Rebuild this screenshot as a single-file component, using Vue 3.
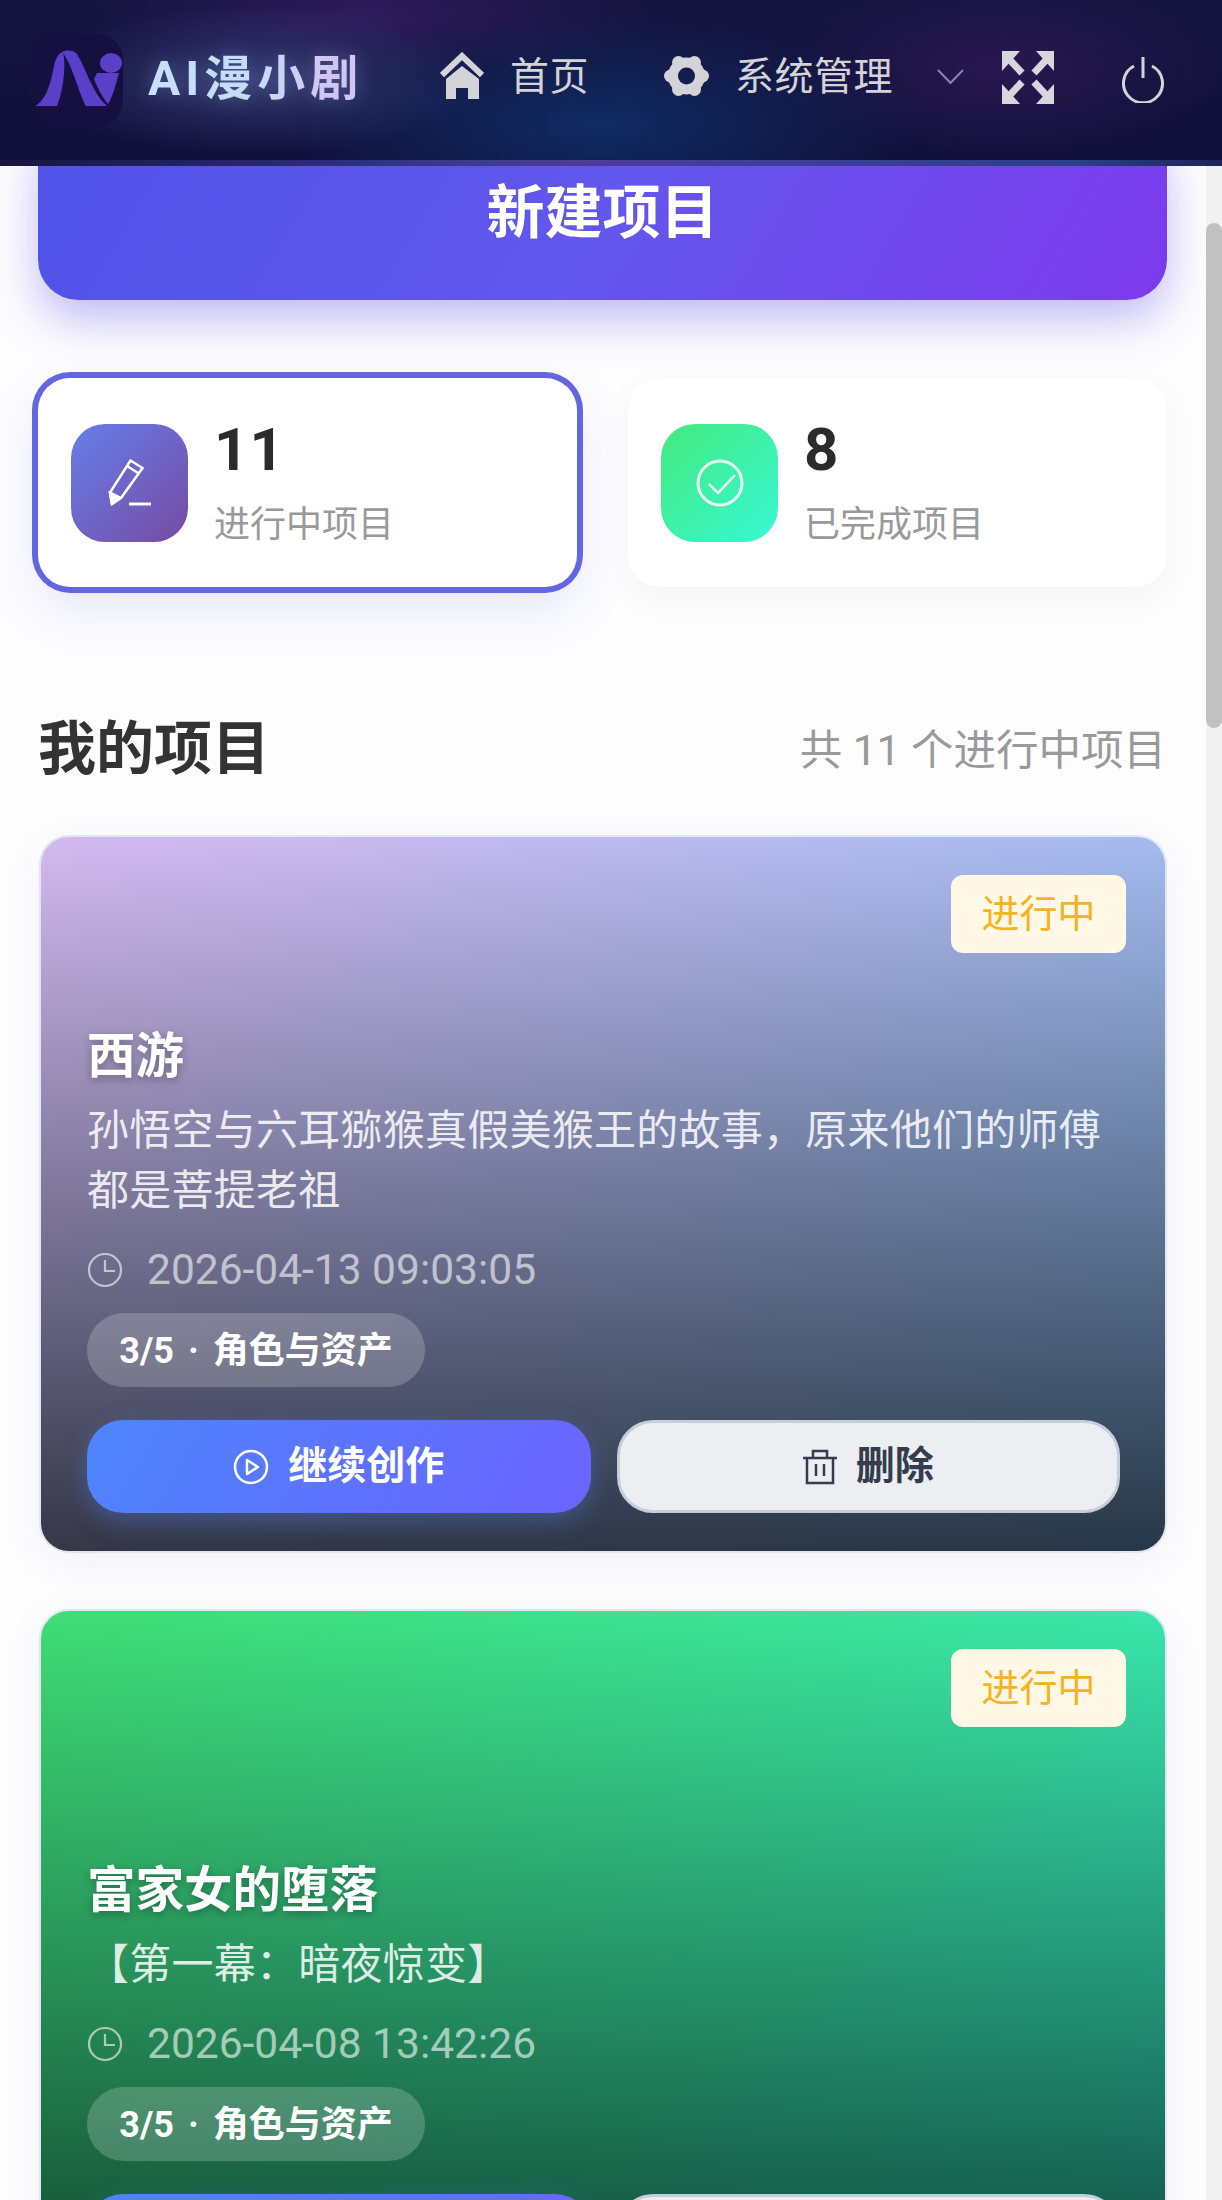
<template>
  <div class="page">
    <header class="topbar">
      <div class="logo">
        <svg viewBox="33 33 90 92" width="90" height="92">
          <path class="ni" d="M35 105C45 100 50 85 53 70C55 58 58 52 63 51C66 62 64 88 57 105Z" />
          <path class="ni" d="M62 51C66 49 72 49 76 52C84 62 92 92 107 105H86C80 96 72 62 62 51Z" />
          <path class="ni" d="M97 72H119C116 82 113 96 108 103C102 96 97 86 94 78C95 76 96 74 97 72Z" />
          <ellipse class="ni" cx="111" cy="62" rx="11" ry="10" />
        </svg>
      </div>
      <div class="brand">AI漫小剧</div>
      <nav class="nav">
        <div class="nav-item">
          <svg viewBox="440 52 44 48" width="44" height="48">
            <path d="M442 75L462 56L482 75" fill="none" stroke="#d3d3d8" stroke-width="6" />
            <path d="M462 66L479 79V99H468V88H456V99H446V79Z" fill="#d3d3d8" />
          </svg>
          <span>首页</span>
        </div>
        <div class="nav-item system">
          <svg viewBox="0 0 45 44" width="45" height="44">
            <g fill="#d3d3d8">
              <circle v-for="a in gearLobes" :key="a.x" :cx="a.x" :cy="a.y" r="6.5" />
            </g>
            <circle cx="22.5" cy="22" r="13.5" fill="none" stroke="#d3d3d8" stroke-width="10" />
          </svg>
          <span>系统管理</span>
        </div>
        <svg class="chevron" viewBox="0 0 27 15" width="27" height="15">
          <path d="M1 1L13.5 14L26 1" fill="none" stroke="#8a86b0" stroke-width="2" />
        </svg>
      </nav>
      <svg class="fullscreen" viewBox="0 0 52 53" width="52" height="53" fill="#d6d6dc" stroke="#d6d6dc">
        <g>
          <path d="M0 0H18L0 20Z" stroke="none" />
          <path d="M7 8L20 22" stroke-width="7" />
        </g>
        <g transform="translate(52 0) scale(-1 1)">
          <path d="M0 0H18L0 20Z" stroke="none" />
          <path d="M7 8L20 22" stroke-width="7" />
        </g>
        <g transform="translate(0 53) scale(1 -1)">
          <path d="M0 0H18L0 20Z" stroke="none" />
          <path d="M7 8L20 22" stroke-width="7" />
        </g>
        <g transform="translate(52 53) scale(-1 -1)">
          <path d="M0 0H18L0 20Z" stroke="none" />
          <path d="M7 8L20 22" stroke-width="7" />
        </g>
      </svg>
      <svg class="power" viewBox="0 0 42 46" width="42" height="46" fill="none" stroke="#d3d3d8" stroke-width="3">
        <path d="M12 9A19.5 19.5 0 1 0 30 9" />
        <path d="M21 0V21" />
      </svg>
    </header>

    <div class="body">
      <main class="main">
        <div class="create-btn">新建项目</div>

        <section class="stats">
          <div class="stat active">
            <div class="stat-icon purple">
              <svg viewBox="108 458 43 47" width="43" height="47" fill="none" stroke="#fff" stroke-width="2.5">
                <path d="M130.5 459.5L142.5 467L121 497L112 503L110 491.5Z" />
                <path d="M127 465L139 472.5M110 491.5L121 497" />
                <path d="M110 492L120 497L112 503Z" fill="#fff" />
                <path d="M129 503H151" stroke-width="3" />
              </svg>
            </div>
            <div class="stat-text">
              <div class="stat-num">11</div>
              <div class="stat-label">进行中项目</div>
            </div>
          </div>
          <div class="stat">
            <div class="stat-icon green">
              <svg viewBox="0 0 48 48" width="48" height="48" fill="none" stroke="#fff" stroke-width="3" opacity="0.9">
                <circle cx="24" cy="24" r="22" />
                <path d="M13 25L22 34L39 16" stroke-width="2.5" />
              </svg>
            </div>
            <div class="stat-text">
              <div class="stat-num">8</div>
              <div class="stat-label">已完成项目</div>
            </div>
          </div>
        </section>

        <div class="section-head">
          <h2>我的项目</h2>
          <span>共 11 个进行中项目</span>
        </div>

        <article v-for="p in projects" :key="p.title" class="card" :class="p.theme">
          <div class="tag">进行中</div>
          <h3>{{ p.title }}</h3>
          <p class="desc">{{ p.desc }}</p>
          <div class="date">
            <svg viewBox="0 0 36 36" width="36" height="36" fill="none" stroke="currentColor" stroke-width="2.2">
              <circle cx="18" cy="18" r="16" />
              <path d="M18 8V19H28" />
            </svg>
            {{ p.date }}
          </div>
          <div class="chip">3/5 · 角色与资产</div>
          <div class="actions">
            <div class="btn primary">
              <svg viewBox="0 0 36 36" width="36" height="36" fill="none" stroke="#fff" stroke-width="2.5">
                <circle cx="18" cy="18" r="16" />
                <path d="M14 11L25 18L14 25Z" stroke-linejoin="round" />
              </svg>
              继续创作
            </div>
            <div class="btn danger">
              <svg viewBox="0 0 34 36" width="34" height="36" fill="none" stroke="#333d4d" stroke-width="2.5">
                <path d="M0 9H34M10 9V2H24V9M4 9V34H30V9M13 15V27M21 15V27" />
              </svg>
              删除
            </div>
          </div>
        </article>
      </main>
      <aside class="scrollbar"><div class="thumb"></div></aside>
    </div>
  </div>
</template>

<script setup>
const projects = [
  {
    title: "西游",
    desc: "孙悟空与六耳猕猴真假美猴王的故事，原来他们的师傅都是菩提老祖",
    date: "2026-04-13 09:03:05",
    theme: "violet",
  },
  {
    title: "富家女的堕落",
    desc: "【第一幕：暗夜惊变】",
    date: "2026-04-08 13:42:26",
    theme: "emerald",
  },
];

const gearLobes = [0, 60, 120, 180, 240, 300].map((deg) => ({
  x: 22.5 + 16 * Math.cos((deg * Math.PI) / 180),
  y: 22 + 15.5 * Math.sin((deg * Math.PI) / 180),
}));
</script>

<style>
html,
body {
  margin: 0;
  background: #fdfdfe;
}
</style>

<style scoped>
.page {
  height: 2200px;
  overflow: hidden;
  background: #fdfdfe;
  font-family: Roboto, "Noto Sans CJK SC", sans-serif;
}

.topbar {
  position: relative;
  z-index: 2;
  box-sizing: border-box;
  height: 166px;
  display: flex;
  align-items: center;
  padding: 0 58px 0 33px;
  color: #d3d3d8;
  border-bottom: 6px solid;
  border-image: linear-gradient(90deg, #17163f, #2a2a78 25%, #3b3a90 38%, #503a98 48%, #3f3e9e 62%, #2d3f8a 88%, #1c2458) 1;
  background:
    radial-gradient(ellipse 230px 75px at 255px 80px, rgba(75, 85, 150, 0.55), transparent),
    radial-gradient(ellipse 280px 60px at 370px 15px, rgba(70, 35, 120, 0.5), transparent),
    radial-gradient(ellipse 320px 110px at 600px 125px, rgba(15, 55, 115, 0.7), transparent),
    radial-gradient(ellipse 220px 90px at 1000px 70px, rgba(60, 30, 100, 0.5), transparent),
    linear-gradient(180deg, #15143f, #11103a);
}

.logo {
  width: 90px;
  height: 92px;
  flex: none;
  border-radius: 26px;
  background: #15103f;
}

.logo svg {
  display: block;
}

.ni {
  fill: #5a3fc9;
}

.brand {
  margin-left: 25px;
  width: 267px;
  flex: none;
  padding-bottom: 3px;
  font-size: 48px;
  font-weight: 700;
  letter-spacing: 5px;
  white-space: nowrap;
  line-height: 60px;
  color: transparent;
  background: linear-gradient(90deg, #c9e0fa, #c4dcf5 40%, #d2c4f2 70%, #cfc8f0 90%, #9fe0dc);
  -webkit-background-clip: text;
  background-clip: text;
  filter: drop-shadow(0 0 10px rgba(150, 180, 240, 0.35));
}

.nav {
  display: flex;
  align-items: center;
  margin-left: 25px;
  margin-bottom: 8px;
  font-size: 39px;
}

.nav-item {
  display: flex;
  align-items: center;
  gap: 26px;
}

.nav-item span {
  margin-bottom: 6px;
  letter-spacing: 0.5px;
}

.system {
  margin-left: 75px;
}

.chevron {
  margin-left: 44px;
}

.fullscreen {
  margin-left: 38px;
  margin-bottom: 5px;
  flex: none;
}

.power {
  margin-left: auto;
  flex: none;
}

.body {
  display: flex;
}

.main {
  flex: 1;
  min-width: 0;
  padding: 0 39px 0 38px;
}

.scrollbar {
  width: 16px;
  height: 2034px;
  flex: none;
  background: #f1f1f1;
}

.thumb {
  height: 505px;
  margin-top: 57px;
  border-radius: 8px;
  background: #c1c1c1;
}

.create-btn {
  box-sizing: border-box;
  height: 175px;
  margin-top: -41px;
  padding-bottom: 10px;
  display: flex;
  align-items: center;
  justify-content: center;
  border-radius: 40px;
  font-size: 58px;
  font-weight: 700;
  color: #fff;
  background: linear-gradient(120deg, #4f52e8, #6257ec 50%, #7c3aed);
  box-shadow: 0 20px 45px rgba(99, 80, 235, 0.38);
}

.stats {
  display: grid;
  grid-template-columns: 1fr 1fr;
  gap: 51px;
  margin-top: 78px;
}

.stat {
  height: 209px;
  display: flex;
  align-items: center;
  gap: 28px;
  padding-left: 33px;
  border-radius: 32px;
  background: #fff;
  box-shadow: 0 12px 36px rgba(0, 0, 0, 0.04);
}

.stat.active {
  box-shadow: 0 0 0 6px #6366e0, 0 20px 50px rgba(99, 102, 241, 0.16);
}

.stat-icon {
  width: 117px;
  height: 118px;
  flex: none;
  display: flex;
  align-items: center;
  justify-content: center;
  border-radius: 34px;
}

.purple {
  background: linear-gradient(135deg, #667eea, #764ba2);
}

.green {
  background: linear-gradient(135deg, #43e97b, #38f9d7);
}

.stat-text {
  margin-top: 5px;
  margin-left: -2px;
}

.stat-num {
  font-size: 60px;
  font-weight: 700;
  line-height: 60px;
  letter-spacing: 1px;
  color: #2b2b2b;
}

.stat-label {
  margin-top: 20px;
  font-size: 36px;
  line-height: 50px;
  color: #999;
}

.section-head {
  display: flex;
  align-items: center;
  justify-content: space-between;
  margin: 127px 1px 51px 0;
}

.section-head h2 {
  margin: 0;
  font-size: 58px;
  font-weight: 700;
  line-height: 70px;
  color: #333;
}

.section-head span {
  margin-bottom: 5px;
  font-size: 42.5px;
  color: #999;
}

.card {
  position: relative;
  box-sizing: border-box;
  height: 718px;
  margin: 0 0 56px 1px;
  padding: 0 45px 38px 46px;
  display: flex;
  flex-direction: column;
  justify-content: flex-end;
  border: 2px solid #dfe6f5;
  border-radius: 30px;
  color: #fff;
  box-shadow: 0 10px 40px rgba(60, 60, 100, 0.06);
}

.violet {
  background: linear-gradient(180deg, rgba(0, 0, 0, 0.05), rgba(0, 0, 0, 0.72)), linear-gradient(135deg, #e0c3fc, #8ec5fc);
}

.emerald {
  background: linear-gradient(180deg, rgba(0, 0, 0, 0.05), rgba(0, 0, 0, 0.72)), linear-gradient(135deg, #43e97b, #38f9d7);
}

.tag {
  position: absolute;
  top: 38px;
  right: 39px;
  box-sizing: border-box;
  width: 175px;
  height: 78px;
  padding-bottom: 8px;
  display: flex;
  align-items: center;
  justify-content: center;
  border-radius: 12px;
  font-size: 38px;
  color: #f5b31d;
  background: #fff8e6;
}

.card h3 {
  margin: 0;
  font-size: 48.5px;
  font-weight: 700;
  line-height: 60px;
  text-shadow: 0 3px 8px rgba(0, 0, 0, 0.3);
}

.desc {
  margin: 14px 0 0;
  font-size: 42px;
  letter-spacing: 0.25px;
  line-height: 60px;
  color: rgba(255, 255, 255, 0.85);
}

.date {
  display: flex;
  align-items: center;
  gap: 24px;
  margin-top: 24px;
  font-size: 42.5px;
  line-height: 50px;
  color: rgba(255, 255, 255, 0.6);
}

.chip {
  align-self: flex-start;
  box-sizing: border-box;
  width: 338px;
  height: 74px;
  margin-top: 18px;
  padding-bottom: 6px;
  display: flex;
  align-items: center;
  justify-content: center;
  border-radius: 37px;
  font-size: 36px;
  font-weight: 700;
  word-spacing: 5px;
  background: rgba(255, 255, 255, 0.2);
}

.actions {
  display: grid;
  grid-template-columns: 1fr 1fr;
  gap: 26px;
  margin-top: 33px;
}

.btn {
  box-sizing: border-box;
  height: 93px;
  display: flex;
  align-items: center;
  justify-content: center;
  gap: 19px;
  border-radius: 36px;
  font-size: 39px;
  font-weight: 700;
  line-height: 85px;
}

.btn svg {
  margin-top: 1px;
}

.primary {
  background: linear-gradient(120deg, #4d85fb, #6c63ff);
  box-shadow: 0 8px 24px rgba(77, 133, 251, 0.35);
}

.danger {
  color: #333d4d;
  background: #eceef1;
  border: 3px solid #c5cedb;
}
</style>
